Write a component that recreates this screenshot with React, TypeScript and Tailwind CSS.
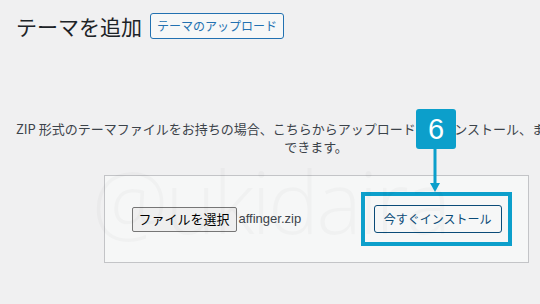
import React from 'react';

const jp = { fontFamily: '"Noto Sans CJK JP", "Liberation Sans", sans-serif' };

function Annotation() {
  return (
    <>
      {/* 番号バッジ */}
      <div className="absolute left-[416px] top-[109px] flex h-[40px] w-[40px] items-center justify-center rounded-[3px] bg-[#0c9fcb] text-[29px] leading-none text-white" style={{ fontFamily: '"Liberation Sans", sans-serif' }}>
        6
      </div>
      {/* 矢印 */}
      <svg className="absolute left-[429px] top-[149px]" width="12" height="44" viewBox="0 0 12 44">
        <rect x="4.5" y="0" width="3" height="35" fill="#0c9fcb" />
        <path d="M1 34 L11 34 L6 43 Z" fill="#0c9fcb" />
      </svg>
    </>
  );
}

export default function App() {
  return (
    <div className="relative h-[304px] w-[540px] overflow-hidden bg-[#f0f0f1] text-[#3c434a]" style={jp}>
      <div className="w-[632px]">
        {/* ヘッダー */}
        <div className="mt-[13px] flex h-[26px] items-center gap-[8px] px-4">
          <h1 className="text-[21px] font-normal leading-none text-[#1d2327]">テーマを追加</h1>
          <button className="h-[26px] rounded-[3px] border border-[#2271b1] bg-[#f6f7f7] px-[6px] text-[12px] leading-none text-[#2271b1]">
            テーマのアップロード
          </button>
        </div>

        {/* 説明 */}
        <p className="mt-[81px] text-center text-[13px] leading-[18px]">
          <span className="whitespace-nowrap pr-[6px]">ZIP 形式のテーマファイルをお持ちの場合、こちらからアップロードしてインストール、または上書き</span>
          <br />
          できます。
        </p>

        {/* アップロードフォーム */}
        <div className="mx-auto mt-[19px] flex h-[88px] w-[425px] items-center justify-between border border-[#c3c4c7] bg-[#f6f7f7] pl-[27px] pr-4">
          <div className="flex items-center gap-[2px]">
            <span className="flex h-[25px] items-center rounded-[2px] border border-[#767676] bg-[#efefef] px-[6px] text-[13px] text-black">
              ファイルを選択
            </span>
            <span className="text-[13px] text-[#3c434a]" style={{ fontFamily: '"Liberation Sans", sans-serif' }}>affinger.zip</span>
          </div>
          <div className="border-4 border-[#0c9fcb] py-[9px] pl-[9px] pr-[6px]">
            <button className="h-[28px] rounded-[3px] border border-[#0a4b78] bg-[#f6f7f7] px-[9px] text-[12px] leading-none text-[#0a4b78]">
              今すぐインストール
            </button>
          </div>
        </div>
      </div>

      {/* 透かし */}
      <div className="pointer-events-none absolute left-[92px] top-[158px] whitespace-nowrap text-[86px] font-light leading-none tracking-[-3px] text-black/[0.022]" style={{ fontFamily: '"Open Sans", sans-serif' }}>
        @ukidaira
      </div>

      <Annotation />
    </div>
  );
}
